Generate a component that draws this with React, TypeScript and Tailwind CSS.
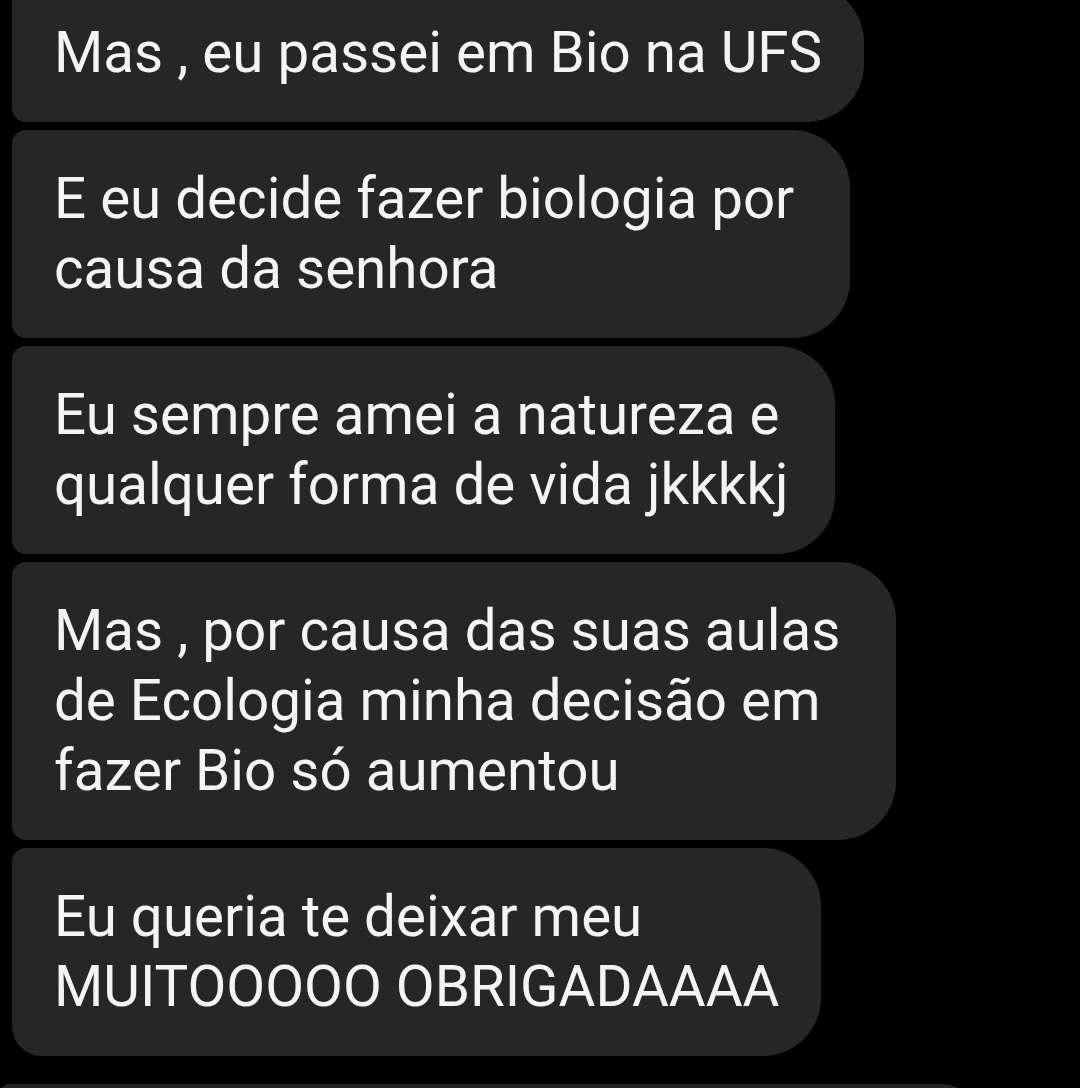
const messages: string[][] = [
  ["Mas , eu passei em Bio na UFS"],
  ["E eu decide fazer biologia por ", "causa da senhora"],
  ["Eu sempre amei a natureza e ", "qualquer forma de vida jkkkkj"],
  ["Mas , por causa das suas aulas ", "de Ecologia minha decisão em ", "fazer Bio só aumentou"],
  ["Eu queria te deixar meu ", "MUITOOOOO OBRIGADAAAA"],
];

function Bubble({ lines, last }: { lines: string[]; last: boolean }) {
  return (
    <div
      className={
        "self-start bg-[#262626] text-[#f4f4f4] pl-[42px] pr-[42px] py-[34px] text-[56.5px] leading-[70px] rounded-tl-[14px] rounded-r-[58px] whitespace-pre " +
        (last ? "rounded-bl-[30px]" : "rounded-bl-[14px]")
      }
    >
      {lines.map((l, i) => (
        <div key={i}>{l}</div>
      ))}
    </div>
  );
}

export default function App() {
  return (
    <div
      className="w-[1080px] h-[1088px] overflow-hidden bg-black"
      style={{ fontFamily: "Roboto, 'Noto Sans', sans-serif" }}
    >
      <div className="flex flex-col gap-2 pl-3 -mt-4">
        {messages.map((m, i) => (
          <Bubble key={i} lines={m} last={i === messages.length - 1} />
        ))}
        {/* next message, cut off at the bottom */}
        <div className="mt-5 -ml-3 w-[981px] h-[60px] bg-[#262626] rounded-tr-[40px] rounded-tl-[10px]" />
      </div>
    </div>
  );
}
